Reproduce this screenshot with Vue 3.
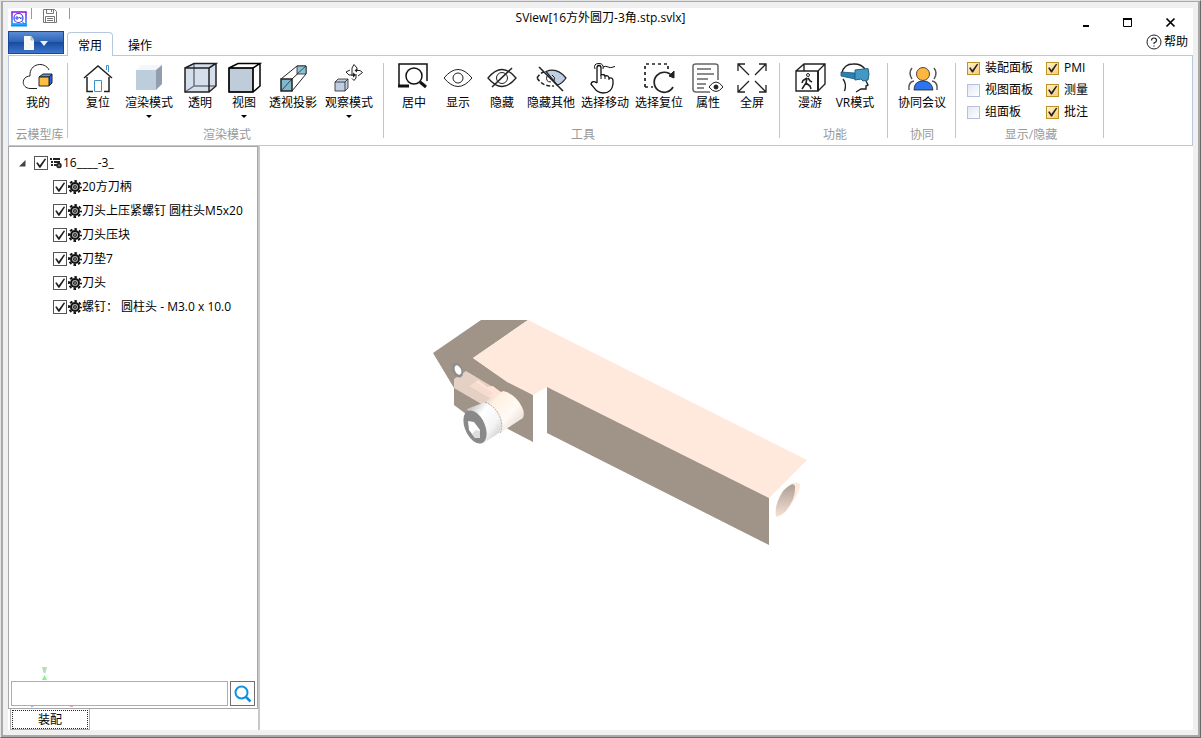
<script setup>
import { ref, reactive } from 'vue'

const cube = '<path d="M3 6H27V30H3Z M3 6L12 1.5H34L27 6 M34 1.5V24L27 30"/>'
const icons = {
  cloud: '<path d="M17 26.5H10C1 26 1 14.500 10 14C9 1 25 -1 29 8"/><path d="M19 15L23 12H32L29 15Z" fill="#5b93ef"/><path d="M29 15L32 12V21L29 24Z" fill="#2467e6"/><path d="M19 15H29V24H19Z" fill="#ffbd42"/>',
  home: '<path d="M4 16L18 4L32 16M7 15V29.500H13M24 29.500H29V15" stroke-width="1.500"/><g stroke="#3d93c6"><path d="M14.500 29.500V18.500H21.500V29.500Z"/><path d="M26.500 8V3.500H28.500V10"/></g>',
  shade: '<g stroke="none"><path d="M5 8H25L31 3H10Z" fill="#f4f7fa"/><path d="M5 8H25V28H5Z" fill="#bccddc"/><path d="M25 8L31 3V22L25 28Z" fill="#929ead"/></g>',
  clear: '<path d="M3 6L12 1.500H34V24L27 30H3Z" fill="#d5dfeb" stroke="none"/><path d="M12 1.500V24H34M12 24L3 30" stroke="#69737e" stroke-width="1.500"/><path d="M3 6H27V30H3Z M3 6L12 1.500H34L27 6 M34 1.500V24L27 30" stroke-width="1.500"/>',
  view: '<path d="M3 6H27V30H3Z" fill="#bfccda"/>' + cube.replace('/>', ' stroke="#000" stroke-width="1.500"/>'),
  persp: '<path d="M6 17L22 4H31V12L17 29M17 17L31 4"/><path d="M22 4H31V12H22Z" fill="#8bc1d6" stroke-width=".8"/><path d="M22 12L31 4" stroke-width=".7"/><path d="M6 17H17V29H6Z" fill="#80b8cf" stroke-width="1.500"/><path d="M6 29L17 17" stroke-width=".8"/>',
  orbit: '<path d="M4 20L7 17H17V26L14 29H4Z" fill="#bfcee0" stroke-width=".8"/><path d="M4 20H14V29M14 20L17 17" stroke-width=".8"/><path d="M21 14V6L23 2.500L26 6V9M25 12V16L23 18.500L21 16.500" /><path d="M19 8L15 10L18 13H23M24 8.500H29L31.500 10.500L27 14"/><path d="M22 10.500L25 13L22 15.500ZM26 6.500L23.500 8.500L26 10.500Z" fill="#222" stroke="none"/>',
  focus: '<g stroke="#111" stroke-width="2"><path d="M3 24V2H31V19" stroke-width="1.500"/><path d="M2 24H13" stroke-width="3"/><circle cx="18" cy="14" r="8" fill="#fff" stroke-width="1.500"/><path d="M24 20L30 25" stroke-width="3"/></g>',
  eye: '<path d="M4 16Q18 -1 32 16Q18 33 4 16Z"/><circle cx="18" cy="16" r="5"/>',
  hide: '<path d="M4 16Q18 -1 32 16Q18 33 4 16Z" stroke-width="1.300"/><circle cx="18" cy="16" r="5.500"/><path d="M8 25L28 6" stroke-width="1.500"/>',
  hideother: '<path d="M13 9.500Q24 5 33 16Q29 22 24 23Z" fill="#bfcee0" stroke-width="1.200"/><path d="M4 16Q7 11 11 10M4 16Q10 25 21 24" stroke-dasharray="4 2" stroke-width="1.500"/><path d="M14 14Q12 20 18 20M19 13Q23 15 21 19"/><path d="M6 5L30 29" stroke-width="1.600"/>',
  hand: '<g stroke="#111"><path d="M10 21V6Q10 3.500 12 3.500Q14 3.500 14 6V13Q17.500 12 18 14Q21.500 13 22 16Q26 15 26 19V22Q25 31 16 31C10 31 8 27 4 22Q5 18 10 21" stroke-width="1.300"/><path d="M14 13V17M18 14V17M22 16V18"/><path d="M8 7Q6 1.500 12 1.500Q17 1.500 16 7"/><path d="M16 5Q19 3.500 21 5T28 4.500"/></g>',
  reset: '<path d="M4 25V2H27V7M4 25H12" stroke-dasharray="3 3" stroke-width="1.700"/><path d="M32 25A10 10 0 1 1 31 14" stroke-width="1.700"/><path d="M28 14L33 9V16Z" fill="#222"/>',
  props: '<path d="M20 30H6Q3 30 3 27V4Q3 2 6 2H25Q28 2 28 4V18" stroke="#666" stroke-width="1.500"/><path d="M7 7H21M7 12H24M7 17H18M7 22H16M7 26H14" stroke="#666" stroke-width="1.300"/><path d="M19 25Q26 15 33 25Q26 34 19 25Z" fill="#fff"/><circle cx="26" cy="25" r="2" fill="#222"/>',
  full: '<path d="M4 9V2H11M25 2H32V9M32 23V30H25M11 30H4V23M4 2L15 13M32 2L21 13M32 30L21 19M4 30L15 19" stroke-width="1.300"/>',
  walk: '<path d="M4 9H26V29H4ZM4 9L12 2H33V22L26 29M26 9L33 2M12 2V9" stroke-width="1.400"/><path d="M26 9V29" stroke-width="2"/><circle cx="16" cy="13" r="1.500"/><path d="M15 16L11 18.500L10 21M15 16L14 21L10 27M14 21L18 24L19 27M16 16L18 19L20 20" stroke-width="1.600"/>',
  vr: '<path d="M5 11Q7 2 16 2Q24 1.500 28 7M6 17Q10 22 7.500 29M29 19L31 23L29 24V27H24L19 30" stroke-width="1.400"/><path d="M4 10L18 11V17L4 14Z" fill="#2484b5" stroke="#1c5578" stroke-width=".8"/><path d="M18 8L31 6.500Q33 12 31 18L26 19L24 17L18 18Z" fill="#4498c4" stroke="#245f85"/>',
  meet: '<g stroke="#555" stroke-width="1.500"><path d="M8 6Q4 11 8 17M30 6Q34 11 30 17M5 28Q4 20 10 19M33 28Q34 20 28 19"/></g><path d="M10 28Q10 19 19 19T29 28Z" fill="#2d75ed" stroke-width=".8"/><circle cx="19" cy="12" r="6.500" fill="#ffb73f" stroke-width=".8"/>',
}

const groups = [
  { name: '云模型库', cls: 'g-cloud', items: [{ t: '我的', i: 'cloud' }] },
  {
    name: '渲染模式', cls: 'g-render', items: [
      { t: '复位', i: 'home' }, { t: '渲染模式', i: 'shade', w: 'drop', menu: true }, { t: '透明', i: 'clear' },
      { t: '视图', i: 'view', menu: true }, { t: '透视投影', i: 'persp', w: 'wide' }, { t: '观察模式', i: 'orbit', w: 'drop', menu: true },
    ],
  },
  {
    name: '工具', cls: 'g-tools', items: [
      { t: '居中', i: 'focus' }, { t: '显示', i: 'eye' }, { t: '隐藏', i: 'hide' }, { t: '隐藏其他', i: 'hideother', w: 'wide' },
      { t: '选择移动', i: 'hand', w: 'wide' }, { t: '选择复位', i: 'reset', w: 'wide' }, { t: '属性', i: 'props' }, { t: '全屏', i: 'full' },
    ],
  },
  { name: '功能', cls: 'g-func', items: [{ t: '漫游', i: 'walk' }, { t: 'VR模式', i: 'vr', w: 'mid' }] },
  { name: '协同', cls: 'g-meet', items: [{ t: '协同会议', i: 'meet', w: 'wide' }] },
]

const panels = reactive([
  { t: '装配面板', on: true }, { t: 'PMI', on: true },
  { t: '视图面板', on: false }, { t: '测量', on: true },
  { t: '组面板', on: false }, { t: '批注', on: true },
])

const rootOn = ref(true)
const parts = reactive([
  '20方刀柄', '刀头上压紧螺钉 圆柱头M5x20', '刀头压块', '刀垫7', '刀头', '螺钉： 圆柱头 - M3.0 x 10.0',
].map((t) => ({ t, on: true })))
const query = ref('')
</script>

<template>
  <div class="window">
    <div class="frame">
      <header class="titlebar">
        <div class="quick">
          <svg class="logo" width="16" height="16" viewBox="0 0 16 16" fill="none">
            <defs><linearGradient id="lg" x2="0" y2="1"><stop stop-color="#a000f0" /><stop offset="1" stop-color="#0098ff" /></linearGradient></defs>
            <path d="M1 1H15V13H1Z" stroke="url(#lg)" stroke-width="1.500" />
            <path d="M0 14.500H16" stroke="#0090ff" stroke-width="2" />
            <circle cx="7.500" cy="7" r="4.500" stroke="#3a45dd" stroke-width="1.200" />
            <path d="M11 10.500L13.500 13M5 6H7V8H5ZM8 6L10 8M10 6V8" stroke="#3a45dd" />
          </svg>
          <i class="tick"></i>
          <button class="save" aria-label="保存">
            <svg width="14" height="14" viewBox="0 0 14 14" fill="none" stroke="#777">
              <path d="M.5 .5H11.500L13.500 2.500V13.500H.5Z" /><path d="M3.500 .5V4.500H10.500V.5M2.500 13V7.500H11.500V13" /><path d="M4 9.500H10M4 11.500H10M8.500 1V3" />
            </svg>
          </button>
          <i class="tick"></i>
        </div>
        <h1>SView[16方外圆刀-3角.stp.svlx]</h1>
        <div class="controls">
          <button aria-label="最小化"><svg width="11" height="11" viewBox="0 0 11 11"><path d="M4 9H10" stroke="#000" stroke-width="2" /></svg></button>
          <button aria-label="最大化"><svg width="11" height="11" viewBox="0 0 11 11"><path d="M1.500 2H9.500V9.500H1.500Z" fill="none" stroke="#000" /><path d="M1 2H10" stroke="#000" stroke-width="2" /></svg></button>
          <button aria-label="关闭"><svg width="11" height="11" viewBox="0 0 11 11"><path d="M1.500 1.500L9.500 9.500M9.500 1.500L1.500 9.500" stroke="#000" stroke-width="1.700" /></svg></button>
        </div>
      </header>

      <nav class="tabs">
        <button class="file" aria-label="文件">
          <svg width="30" height="16" viewBox="0 0 30 16">
            <path d="M2 1H9L12 5V15H2Z" fill="#f7f9f4" /><path d="M9 1V5H12" fill="#cbd3d4" stroke="#9aaab7" stroke-width=".7" /><path d="M18 6H26L22 11Z" fill="#eaf2ff" />
          </svg>
        </button>
        <button class="tab active">常用</button>
        <button class="tab">操作</button>
        <a class="help" href="#">
          <svg width="16" height="16" viewBox="0 0 16 16" fill="none" stroke="#222"><circle cx="8" cy="8" r="7" /><path d="M5.500 6.500Q5.500 4 8 4T10.500 6.500Q10.500 8 8 9V10M8 11.500V12.500" stroke-width="1.200" /></svg>帮助
        </a>
      </nav>

      <section class="ribbon">
        <div v-for="g in groups" :key="g.name" class="group" :class="g.cls">
          <div class="tools">
            <button v-for="b in g.items" :key="b.t" class="tool" :class="b.w">
              <svg width="36" height="33" viewBox="0 0 36 33" fill="none" stroke="#222" v-html="icons[b.i]"></svg>
              <span>{{ b.t }}</span>
              <i v-if="b.menu" class="caret"></i>
            </button>
          </div>
          <div class="caption">{{ g.name }}</div>
        </div>
        <div class="group g-show">
          <div class="checks">
            <label v-for="p in panels" :key="p.t"><input v-model="p.on" type="checkbox" class="gold">{{ p.t }}</label>
          </div>
          <div class="caption">显示/隐藏</div>
        </div>
      </section>

      <main>
        <aside>
          <div class="panel">
            <ul class="tree">
              <li class="root">
                <svg class="twist" width="7" height="7" viewBox="0 0 7 7"><path d="M6.500 0V6.500H0Z" fill="#444" /></svg>
                <label>
                  <input v-model="rootOn" type="checkbox" class="box">
                  <svg class="asm" width="12" height="12" viewBox="0 0 12 12" stroke="#222"><path d="M0 2H2M3 2H10M1 5H3M4 5H10M1 8H3M4 8H7" stroke-width="2" /><circle cx="9" cy="8.500" r="2" fill="#777" stroke-width="1.500" /></svg>16____-3_
                </label>
              </li>
              <li v-for="p in parts" :key="p.t">
                <label>
                  <input v-model="p.on" type="checkbox" class="box">
                  <svg class="gear" width="14" height="14" viewBox="0 0 14 14" fill="none" stroke="#111"><circle cx="7" cy="7" r="6" stroke-width="2" stroke-dasharray="2.600 2.112" stroke-dashoffset="1.300" /><circle cx="7" cy="7" r="4" fill="#aaa" stroke-width="2" /><circle cx="7" cy="7" r="1.500" fill="#888" stroke-width=".8" /></svg>{{ p.t }}
                </label>
              </li>
            </ul>
            <svg class="axis" width="50" height="42" viewBox="0 0 50 42">
              <path d="M11 1H16L14.500 7H12.500Z" fill="#b5dfba" /><path d="M13.500 9L16 14H11Z" fill="#80fa80" />
              <path d="M0 41L3 39.500" stroke="#9090ef" /><path d="M39 40.500H42" stroke="#d5b0a8" />
            </svg>
            <form class="search" @submit.prevent>
              <input v-model="query" type="text" aria-label="搜索">
              <button aria-label="搜索"><svg width="18" height="18" viewBox="0 0 18 18" fill="none" stroke="#138fdb" stroke-width="2"><circle cx="7.500" cy="7.500" r="6" /><path d="M12 12L16.500 16.500" stroke-width="2.500" /></svg></button>
            </form>
          </div>
          <button class="bottomtab"><span>装配</span></button>
        </aside>

        <div class="canvas">
          <svg viewBox="260 146 933 584" role="img" aria-label="16方外圆刀">
            <defs>
              <linearGradient id="shaft" x1="0" y1="0" x2="1" y2="1"><stop stop-color="#cdb9aa" /><stop offset=".25" stop-color="#fff1e2" /><stop offset=".6" stop-color="#fffaf5" /><stop offset="1" stop-color="#dccdc1" /></linearGradient>
              <linearGradient id="head" x1="0" y1="0" x2="1" y2="1"><stop stop-color="#aaa" /><stop offset=".35" stop-color="#fff" /><stop offset=".65" stop-color="#f5f5f5" /><stop offset="1" stop-color="#bbb" /></linearGradient>
              <linearGradient id="bore" x1="0" y1="0" x2="0" y2="1"><stop stop-color="#ad9f95" /><stop offset="1" stop-color="#f4dfd3" /></linearGradient>
            </defs>
            <path d="M433 353L481 320H528L473 358L496 374L533 395V442L508 429L454 388Z" fill="#a09388" />
            <path d="M528 320L807 460L769 498L547 387L533 395L507 382L473 358Z" fill="#ffe8dc" />
            <path d="M547 387L769 498V545L547 433Z" fill="#a09388" />
            <path d="M454 380V405L466 414L490 406V392Z" fill="#a09388" />
            <path d="M454 388V379L466 371L503 393L490 403L483 405Z" fill="#e4d1c4" />
            <path d="M470 386L478 380L487 387L493 386L503 394L490 398Z" fill="#ffe3d6" />
            <path d="M470 386L476 382L493 393L489 397Z" fill="#f6dccf" />
            <ellipse cx="457.500" cy="370" rx="5" ry="8" transform="rotate(-24 457.500 370)" fill="#8e8d8b" />
            <ellipse cx="458" cy="370" rx="3" ry="5" transform="rotate(-24 458 370)" fill="#fff" />
            <path d="M484 402L503 391Q516 394 522 407Q525 413 523 418L500 433Z" fill="url(#shaft)" />
            <path d="M467 409L485 402Q496 407 501 420Q503 431 496 435L482 444Z" fill="url(#head)" />
            <path d="M485 402Q497 407 501 420Q503 428 500 433" fill="none" stroke="#777" stroke-width=".6" stroke-dasharray="2 1" />
            <ellipse cx="475" cy="427" rx="10" ry="17.500" transform="rotate(-24 475 427)" fill="#898989" />
            <path d="M468 421L474 422L480 430L480 438L475 438L469 430Z" fill="#fff" />
            <path d="M472 434L476 430L480 431V438L475 438Z" fill="#ddd" />
            <path d="M790 484Q801 480 800 487Q798 497 783 514Q776 518 776 516Z" fill="#ffe9dc" />
            <path d="M776 516Q774 505 783 491Q793 481 795 486Q796 499 785 512Q778 517 776 516Z" fill="url(#bore)" />
          </svg>
        </div>
      </main>
    </div>
  </div>
</template>

<style>
html, body, #app { height: 100%; }
body { margin: 0; }
</style>

<style scoped>
* { box-sizing: border-box; }
.window {
  height: 100%;
  font: 12px/16px "Open Sans", "Noto Sans CJK SC", sans-serif;
  color: #000;
  background: #f0f0f0;
  border: 1px solid;
  border-color: #e3e3e3 #696969 #696969 #e3e3e3;
}
.frame {
  height: 100%;
  display: flex;
  flex-direction: column;
  border: 2px solid #a9a9a9;
  border-top-width: 1px;
  padding: 6px 5px 5px;
}
.titlebar, .tabs, main, .ribbon { background: #fff; }
button { font: inherit; color: inherit; border: 0; padding: 0; background: none; }
svg { display: block; flex: none; }
.titlebar { display: grid; grid-template-columns: 1fr auto 1fr; height: 23px; flex: none; }
.quick { display: flex; align-items: flex-start; padding-left: 3px; }
.logo { margin-top: 3px; }
.tick { width: 1px; height: 11px; background: #999; margin: 0 11px 0 4px; }
.save { margin-top: 1px; }
.save + .tick { margin-left: 12px; }
h1 { margin: 0; font: inherit; line-height: 20px; }
.controls { display: flex; justify-content: flex-end; gap: 32px; padding: 9px 17px 0 0; }
.controls button { height: 11px; }
.tabs { display: flex; height: 24px; flex: none; position: relative; z-index: 1; }
.file {
  width: 56px; height: 23px; display: grid; place-items: center; padding-left: 2px;
  background: linear-gradient(#5b8bd5, #2e65b8 45%, #184c9f 50%, #3b75cc);
  border: 1px solid #1b479b; margin-right: 3px;
}
.tab { width: 46px; height: 24px; margin-top: 1px; line-height: 25px; border: 1px solid transparent; border-bottom: 0; border-radius: 4px 4px 0 0; }
.tab + .tab { margin-left: 4px; }
.tab.active { border-color: #b8c8dc; background: #fff; }
.help { margin-left: auto; margin-right: 5px; display: flex; gap: 2px; height: 22px; align-items: center; color: #000; text-decoration: none; }
.ribbon { display: flex; flex: none; border: 1px solid #b9c8da; padding: 6px 0 2px; }
.group { position: relative; padding-left: 8px; }
.group::after { content: ""; position: absolute; right: 0; top: 1px; height: 75px; width: 1px; background: #b9c8da; }
.g-cloud { width: 59px; padding: 0 5px 0 7px; }
.g-cloud .caption { display: flex; justify-content: center; }
.g-render { padding-right: 6px; }
.g-tools { padding-right: 6px; }
.g-func { padding-right: 10px; }
.g-func .caption { padding-left: 4px; }
.g-meet { padding: 0 7px; }
.g-show { width: 148px; padding-left: 11px; }
.g-show .caption { padding-right: 9px; }
.tools { display: flex; height: 65px; }
.tool { width: 44px; flex: none; display: flex; flex-direction: column; align-items: center; white-space: nowrap; }
.tool.mid { width: 46px; }
.tool.wide { width: 54px; }
.tool.drop { width: 58px; }
.tool span { line-height: 16px; }
.caret { border: 3px solid transparent; border-top-color: #000; border-bottom: 0; margin-top: 4px; }
.caption { color: #999; text-align: center; line-height: 16px; white-space: nowrap; }
.checks { display: grid; grid-template-columns: 79px 1fr; grid-auto-rows: 22px; height: 65px; }
.checks label { display: flex; align-items: center; gap: 5px; line-height: 12px; height: 12px; }
input { margin: 0; appearance: none; flex: none; font: inherit; }
.gold { width: 13px; height: 13px; border: 1px solid #b5bfe0; background: linear-gradient(135deg, #e4e8f5, #fff); }
.gold:checked { border-color: #be9325; background: linear-gradient(135deg, #fff2cf, #fcca76); }
.gold:checked::before, .box:checked::before { content: ""; display: block; width: 100%; height: 100%; background: #222; clip-path: polygon(10% 50%, 22% 44%, 40% 68%, 82% 12%, 93% 16%, 46% 90%, 36% 90%); }
main { flex: 1; display: flex; min-height: 0; }
aside { width: 252px; flex: none; display: flex; flex-direction: column; align-items: flex-start; border-right: 2px solid #c8c8c8; }
.panel { flex: 1; align-self: stretch; position: relative; display: flex; flex-direction: column; border: 1px solid #a5a7aa; }
.tree { list-style: none; margin: 0; padding: 4px 0 0; flex: 1; }
.tree li { height: 24px; display: flex; align-items: center; padding-left: 44px; white-space: nowrap; }
.tree .root { padding-left: 10px; gap: 8px; }
.tree label { display: flex; align-items: center; }
.box { width: 14px; height: 14px; border: 1px solid #555; background: #fff; }
.asm { margin: 0 1px 0 2px; }
.gear { margin-left: 1px; }
.axis { position: absolute; left: 22px; bottom: 0; }
.search { display: flex; gap: 2px; padding: 0 2px 2px; position: relative; }
.search input { flex: 1; min-width: 0; height: 25px; border: 1px solid #abadb3; background: #fff; }
.search button { width: 25px; height: 25px; border: 1px solid #707070; background: #fff; display: grid; place-items: center; }
.bottomtab { width: 80px; height: 21px; margin-left: 2px; border: 1px solid #acacac; border-top: 0; padding: 1px; }
.bottomtab span { display: block; border: 1px dotted #222; line-height: 17px; }
.canvas { flex: 1; min-width: 0; }
.canvas svg { width: 100%; height: 100%; }
</style>
